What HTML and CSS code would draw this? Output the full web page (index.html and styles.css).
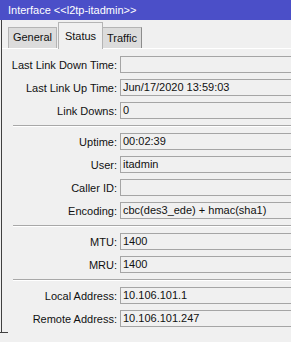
FILE: index.html
```html
<!DOCTYPE html>
<html lang="en">
<head>
  <meta charset="UTF-8">
  <meta name="viewport" content="width=device-width, initial-scale=1.0">
  <title>Interface &lt;&lt;l2tp-itadmin&gt;&gt;</title>
  <link rel="stylesheet" href="styles.css">
</head>
<body>
  <!-- Window title -->
  <div class="titlebar">Interface &lt;&lt;l2tp-itadmin&gt;&gt;</div>

  <div class="frame">
    <!-- Tab strip -->
    <div class="tabs">
      <div class="tab tab-general">General</div>
      <div class="tab tab-status active">Status</div>
      <div class="tab tab-traffic">Traffic</div>
    </div>

    <!-- Status panel -->
    <div class="panel">
      <div class="row"><label>Last Link Down Time:</label><div class="field"></div></div>
      <div class="row"><label>Last Link Up Time:</label><div class="field">Jun/17/2020 13:59:03</div></div>
      <div class="row"><label>Link Downs:</label><div class="field">0</div></div>

      <div class="sep"></div>

      <div class="row"><label>Uptime:</label><div class="field">00:02:39</div></div>
      <div class="row"><label>User:</label><div class="field">itadmin</div></div>
      <div class="row"><label>Caller ID:</label><div class="field"></div></div>
      <div class="row"><label>Encoding:</label><div class="field">cbc(des3_ede) + hmac(sha1)</div></div>

      <div class="sep"></div>

      <div class="row"><label>MTU:</label><div class="field">1400</div></div>
      <div class="row"><label>MRU:</label><div class="field">1400</div></div>

      <div class="sep"></div>

      <div class="row"><label>Local Address:</label><div class="field">10.106.101.1</div></div>
      <div class="row"><label>Remote Address:</label><div class="field">10.106.101.247</div></div>
    </div>
  </div>
</body>
</html>
```

FILE: styles.css
```css
body {
  margin: 0;
  background-color: #f0f0f0;
  font-family: 'Liberation Sans', Arial, sans-serif;
  font-size: 11px;
  color: #111;
  overflow: hidden;
  width: 291px;
  height: 342px;
}
/* Blue title bar */
.titlebar {
  height: 20px;
  line-height: 20px;
  padding-left: 8px;
  background-color: #4b4fc8;
  color: #fff;
  font-size: 11px;
}
/* Left window edge */
.frame {
  position: relative;
  margin-left: 1px;
  border-left: 1px solid #404040;
  height: 313px;
}
.frame::after {
  content: '';
  position: absolute;
  left: -2px;
  bottom: 0;
  width: 8px;
  height: 1px;
  background-color: #404040;
}
/* Tabs */
.tabs {
  display: flex;
  align-items: flex-end;
  height: 28px;
  padding-left: 6px;
}
.tab {
  box-sizing: border-box;
  height: 21px;
  line-height: 19px;
  text-align: center;
  background-color: #dcdcdc;
  border: 1px solid #b4b4b4;
  border-bottom: none;
}
.tab-general {
  width: 49px;
  margin-right: 1px;
}
.tab-status {
  width: 45px;
}
.tab-traffic {
  width: 39px;
  border-left: none;
  border-right-color: #8c8c8c;
  line-height: 20px;
}
.tab.active {
  height: 27px;
  line-height: 27px;
  background-color: #f0f0f0;
  margin-bottom: -1px;
  position: relative;
}
/* Panel with form rows; fields run off the right edge */
.panel {
  border-top: 1px solid #fff;
  padding-top: 4px;
  overflow: hidden;
}
.row {
  display: grid;
  grid-template-columns: 115px 200px;
  column-gap: 3px;
  align-items: center;
  height: 23px;
}
.row label {
  text-align: right;
  white-space: nowrap;
}
.field {
  box-sizing: border-box;
  height: 17px;
  line-height: 15px;
  padding-left: 2px;
  border: 1px solid #a5a5a5;
  background-color: #f0f0f0;
  white-space: nowrap;
}
.sep {
  margin: 3px 0 3px 11px;
  border-top: 1px solid #a8a8a8;
  border-bottom: 1px solid #fff;
}
```
